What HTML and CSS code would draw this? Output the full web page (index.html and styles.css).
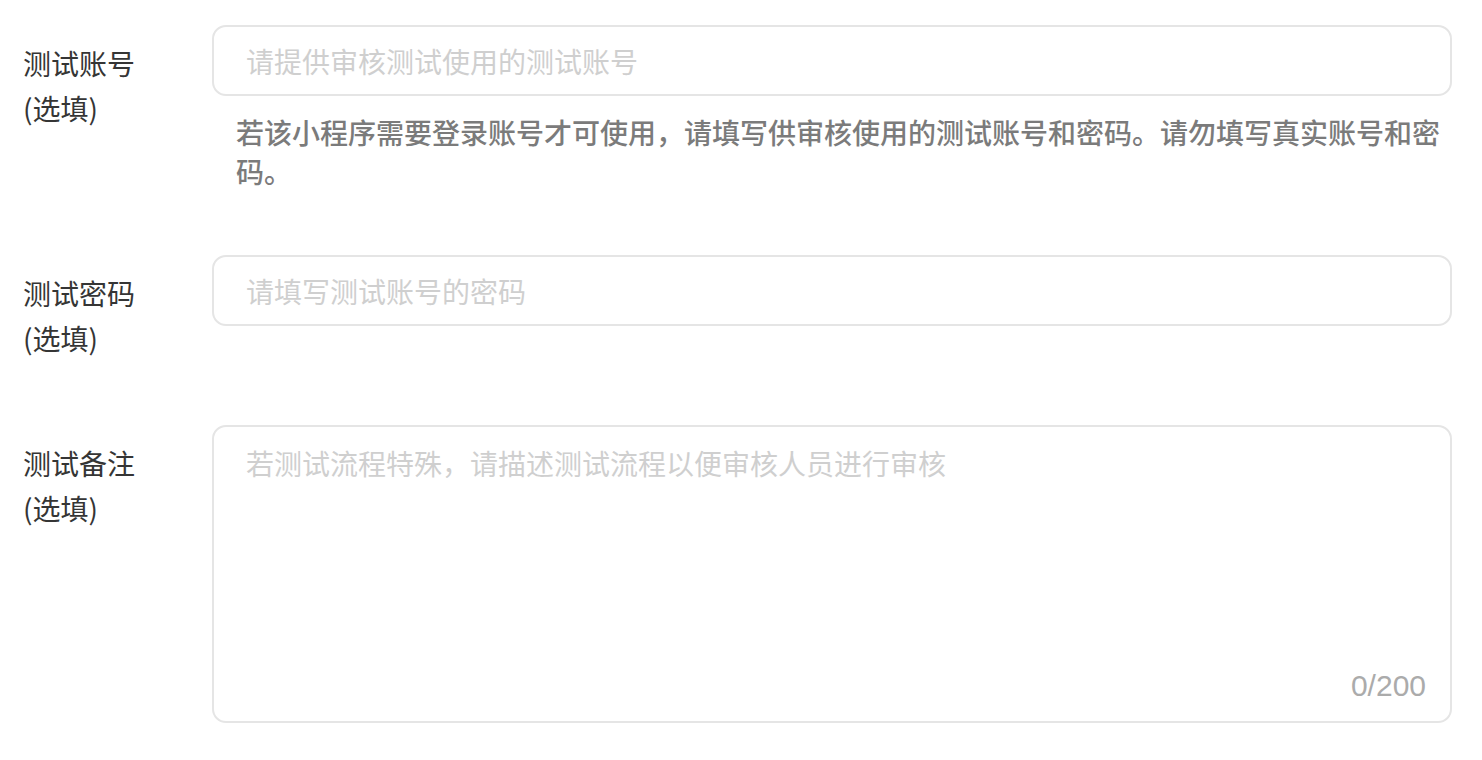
FILE: index.html
```html
<!DOCTYPE html>
<html lang="zh-CN">
<head>
    <meta charset="UTF-8">
    <meta name="viewport" content="width=device-width, initial-scale=1.0">
    <title>测试账号</title>
    <link rel="stylesheet" href="styles.css">
</head>
<body>
    <div class="form">
        <!-- 测试账号 -->
        <div class="form-item">
            <div class="label">测试账号<br>(选填)</div>
            <div class="field">
                <input type="text" class="input" placeholder="请提供审核测试使用的测试账号">
                <p class="tip">若该小程序需要登录账号才可使用，请填写供审核使用的测试账号和密码。请勿填写真实账号和密码。</p>
            </div>
        </div>

        <!-- 测试密码 -->
        <div class="form-item">
            <div class="label">测试密码<br>(选填)</div>
            <div class="field">
                <input type="text" class="input" placeholder="请填写测试账号的密码">
            </div>
        </div>

        <!-- 测试备注 -->
        <div class="form-item">
            <div class="label">测试备注<br>(选填)</div>
            <div class="field">
                <div class="textarea-box">
                    <textarea class="textarea" maxlength="200" placeholder="若测试流程特殊，请描述测试流程以便审核人员进行审核"></textarea>
                    <span class="count">0/200</span>
                </div>
            </div>
        </div>
    </div>
</body>
</html>
```

FILE: styles.css
```css
* {
  margin: 0;
  padding: 0;
  box-sizing: border-box;
}

body {
  background-color: #fff;
  font-family: "Noto Sans CJK SC", "Noto Sans", sans-serif;
  color: #353535;
}

.form {
  padding: 25px 30px 0 23px;
}

.form-item {
  display: flex;
  margin-bottom: 64px;
}

.label {
  width: 189px;
  flex-shrink: 0;
  padding-top: 16px;
  font-size: 28px;
  line-height: 45px;
  color: #353535;
}

.field {
  flex: 1;
}

.input,
.textarea {
  all: unset;
  display: block;
  width: 100%;
  box-sizing: border-box;
  border: 2px solid #e5e5e5;
  border-radius: 14px;
  font-family: "Noto Sans CJK SC", "Noto Sans", sans-serif;
  font-size: 28px;
  color: #353535;
}

.input {
  height: 71px;
  padding: 0 32px;
}

.input::placeholder,
.textarea::placeholder {
  color: #cfcfcf;
}

.tip {
  margin-top: 17px;
  padding-left: 24px;
  font-size: 28px;
  line-height: 39px;
  font-weight: 500;
  color: #7b7b7b;
}

.textarea-box {
  position: relative;
}

.textarea {
  height: 298px;
  padding: 16px 32px;
  line-height: 40px;
  resize: none;
}

.count {
  position: absolute;
  right: 26px;
  bottom: 20px;
  font-family: "Liberation Sans", sans-serif;
  font-size: 30px;
  color: #ababab;
}
```
